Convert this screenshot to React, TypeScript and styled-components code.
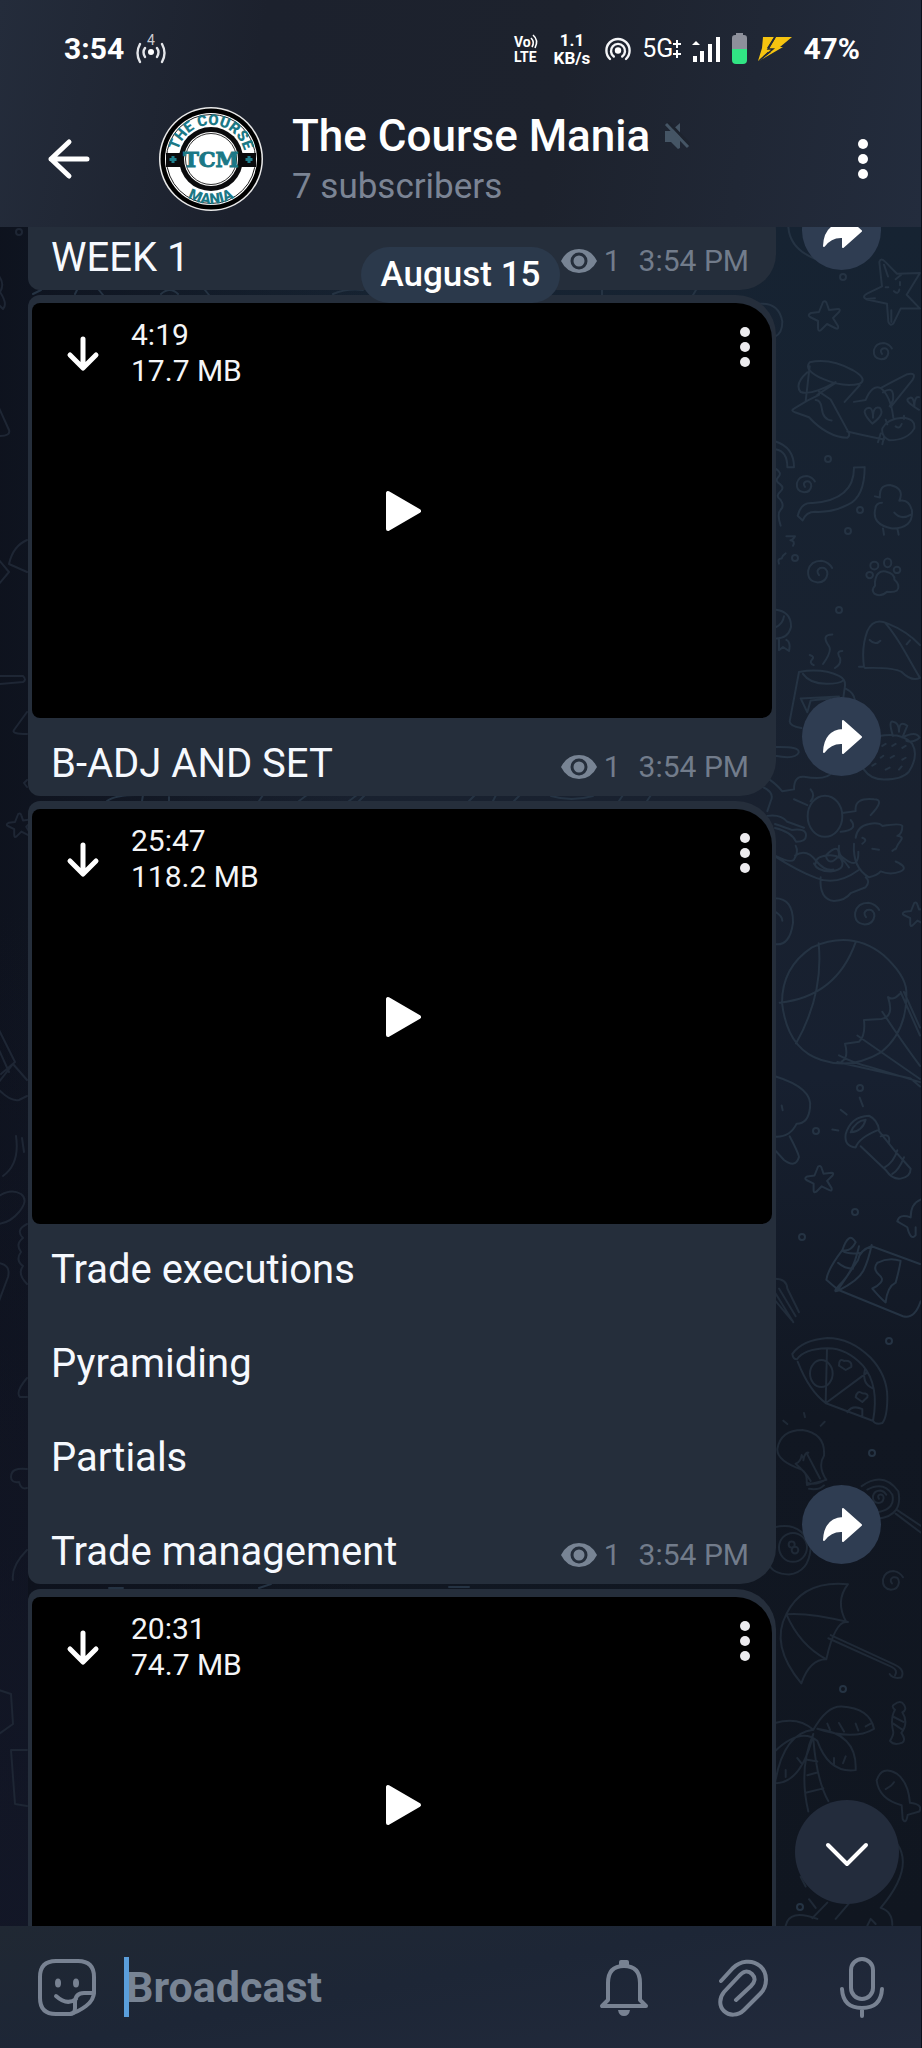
import React from 'react';
import styled, { createGlobalStyle } from 'styled-components';

const GlobalStyle = createGlobalStyle`
  *, *::before, *::after { box-sizing: border-box; }
  html, body, #root { height: 100%; }
  body { margin: 0; background: #111722; font-family: Roboto, "Liberation Sans", sans-serif; }
  button, input { font: inherit; color: inherit; border: 0; padding: 0; margin: 0; background: none; }
  button { cursor: pointer; }
  svg { display: block; flex: none; }
`;

const Screen = styled.div`
  height: 100vh;
  display: flex;
  flex-direction: column;
  overflow: hidden;
  border-right: 1px solid #0c111b;
  color: #fff;
`;

const Header = styled.header`
  flex: none;
  background: linear-gradient(100deg, #242c3b 0%, #1c212d 28%, #1d222d 60%, #232c3d 100%);
`;

const StatusBar = styled.div`
  display: flex;
  align-items: center;
  justify-content: space-between;
  height: 97px;
  padding: 0 61px 0 64px;
`;

const StatusGroup = styled.div<{ $gap: number }>`
  display: flex;
  align-items: center;
  gap: ${({ $gap }) => $gap}px;
`;

const Clock = styled.span`
  font-size: 30px;
  font-weight: 700;
  line-height: 36px;
`;

const Stacked = styled.span`
  display: flex;
  flex-direction: column;
  align-items: center;
  padding: 0 4px 0 2px;
  font-size: 17px;
  font-weight: 700;
  line-height: 18px;
`;

const Network = styled.span`
  display: flex;
  align-items: center;
  font-size: 25px;
  line-height: 32px;
`;

const TitleBar = styled.div`
  display: flex;
  align-items: center;
  height: 130px;
  padding: 0 43px 7px 43px;
`;

const IconButton = styled.button`
  flex: none;
  display: flex;
  align-items: center;
  justify-content: center;
`;

const AvatarSlot = styled.div`
  margin: 0 29px 0 66px;
`;

const TitleText = styled.div`
  flex: 1;
  min-width: 0;
  padding-top: 4px;
`;

const Title = styled.h1`
  display: flex;
  align-items: center;
  gap: 14px;
  margin: 0;
  font-size: 44px;
  font-weight: 500;
  line-height: 52px;
  white-space: nowrap;
`;

const Subtitle = styled.p`
  margin: 0;
  font-size: 35px;
  line-height: 50px;
  color: #7b8494;
`;

const Chat = styled.main`
  position: relative;
  flex: 1;
  min-height: 0;
  overflow: hidden;
  background:
    linear-gradient(180deg, rgba(20, 24, 41, 0) 40%, rgba(20, 24, 41, 0.8) 100%) 0 0 / 28px 100% no-repeat,
    linear-gradient(90deg, rgba(13, 17, 28, 0.9) 0, rgba(13, 17, 28, 0) 40%),
    linear-gradient(180deg, #162332 0%, #19212f 35%, #172030 50%, #111722 70%, #101620 100%);
`;

const Wallpaper = styled.svg`
  position: absolute;
  inset: 0;
  width: 100%;
  height: 100%;
  fill: none;
  stroke: #253343;
  stroke-width: 2;
  stroke-linecap: round;
  stroke-linejoin: round;

  path, circle, ellipse { vector-effect: non-scaling-stroke; }
`;

/* The list is scrolled 36px, so the first post is partly under the header. */
const Messages = styled.ol`
  position: relative;
  display: flex;
  flex-direction: column;
  gap: 5px;
  margin: -36px 0 0;
  padding: 0 40px 0 28px;
  list-style: none;
`;

const Row = styled.li`
  display: flex;
  align-items: flex-end;
  justify-content: space-between;
  gap: 26px;
`;

const Bubble = styled.article<{ $textOnly?: boolean }>`
  flex: 1;
  align-self: stretch;
  display: flex;
  flex-direction: column;
  justify-content: flex-end;
  background: #252e3b;
  border-radius: 12px 40px 36px 12px;
  padding: ${({ $textOnly }) => ($textOnly ? '0 4px' : '8px 4px 0')};
`;

const Video = styled.div`
  display: flex;
  align-items: flex-start;
  position: relative;
  height: 415px;
  padding: 14px 12px 0 34px;
  background: #000;
  border-radius: 8px 36px 10px 8px;
`;

const VideoInfo = styled.div`
  flex: 1;
  display: flex;
  flex-direction: column;
  padding-left: 31px;
  font-size: 30px;
  line-height: 36px;
  color: #f4f5f7;
`;

const DownloadButton = styled(IconButton)`
  margin-top: 16px;
`;

const PlayButton = styled(IconButton)`
  position: absolute;
  inset: 0;
  margin: auto;
  width: 60px;
  height: 60px;
  padding-left: 3px;
`;

const Caption = styled.div`
  display: flex;
  align-items: flex-end;
  justify-content: space-between;
  padding: 22px 23px 9px 19px;
`;

const CaptionText = styled.p`
  margin: 0;
  font-size: 40px;
  line-height: 47px;
  white-space: pre-line;
  color: #f6f9fe;
`;

const Meta = styled.div`
  display: flex;
  align-items: center;
  font-size: 30px;
  line-height: 36px;
  padding-bottom: 2px;
  color: #727c8b;
`;

const Views = styled.span`
  padding: 0 18px 0 7px;
`;

const ShareButton = styled(IconButton)`
  width: 79px;
  height: 79px;
  margin-bottom: 20px;
  border-radius: 50%;
  background: #2f3d52;
`;

const ShareSpacer = styled.span`
  width: 79px;
  flex: none;
`;

const DateBadge = styled.time`
  position: absolute;
  top: 20px;
  left: 50%;
  transform: translateX(-50%);
  padding: 0 20px;
  border-radius: 28px;
  background: #2b394b;
  font-size: 35px;
  font-weight: 500;
  line-height: 56px;
  white-space: nowrap;
`;

const ScrollDown = styled(IconButton)`
  position: absolute;
  right: 22px;
  bottom: 22px;
  width: 104px;
  height: 104px;
  padding-top: 4px;
  border-radius: 50%;
  background: #232c3c;
`;

const Composer = styled.footer`
  flex: none;
  display: flex;
  align-items: center;
  height: 122px;
  padding: 0 28px 0 36px;
  color: #788292;
  background: linear-gradient(170deg, #202833 0%, #1d2636 45%, #222a3c 100%);
`;

const InputField = styled.label`
  position: relative;
  flex: 1;
  min-width: 0;
  margin: 0 40px 0 26px;

  &::before {
    content: '';
    position: absolute;
    inset: 0 auto 0 0;
    width: 5px;
    background: #5a9edb;
  }
`;

const BroadcastInput = styled.input`
  display: block;
  width: 100%;
  height: 60px;
  padding-left: 2px;
  outline: none;
  font-size: 43px;
  font-weight: 700;

  &::placeholder { color: #788494; opacity: 1; }
`;

const Tools = styled.div`
  display: flex;
  align-items: center;
  gap: 57px;
`;

const MoreIcon = ({ color = '#fff' }: { color?: string }) => (
  <svg width="30" height="60" viewBox="0 0 30 60" fill={color}>
    <circle cx="15" cy="15" r="5" />
    <circle cx="15" cy="30" r="5" />
    <circle cx="15" cy="45" r="5" />
  </svg>
);

const BackIcon = () => (
  <svg width="50" height="50" viewBox="0 0 50 50" fill="none" stroke="#fff" strokeWidth="5" strokeLinecap="round" strokeLinejoin="round">
    <path d="M26 8 8 25l18 17M8 25h36" />
  </svg>
);

const HotspotCount = () => (
  <svg width="32" height="30" viewBox="0 0 32 30" fill="none" stroke="#e4e6ea" strokeWidth="2.400" strokeLinecap="round">
    <circle cx="16" cy="18" r="3" fill="#fff" stroke="none" />
    <path d="M10 14q-3 4 0 9M22 14q3 4 0 9M5 10q-5 9 0 18M27 10q5 9 0 18" />
    <text x="16" y="11" textAnchor="middle" fontSize="14" fill="#c9ccd2" stroke="none">4</text>
  </svg>
);

const VoLte = () => (
  <svg width="28" height="30" viewBox="0 0 28 30" fill="none" stroke="#fff" strokeWidth="2">
    <text x="1" y="13" fontSize="14" fontWeight="700" fill="#fff" stroke="none">Vo</text>
    <text x="1" y="28" fontSize="14" fontWeight="700" fill="#fff" stroke="none">LTE</text>
    <path d="M18 4q4 4 1 9M20 1q6 5 2 13" strokeWidth="1.600" />
  </svg>
);

const HotspotIcon = () => (
  <svg width="26" height="26" viewBox="0 0 26 26" fill="none" stroke="#f4f5f7" strokeWidth="2.400" strokeLinecap="round">
    <circle cx="13" cy="14.500" r="3.200" fill="#fff" stroke="none" />
    <path d="M8.800 20.500a7 7 0 1 1 8.400 0M5 23A11.600 11.600 0 1 1 21 23" />
  </svg>
);

const PlusMinusIcon = () => (
  <svg width="8" height="22" viewBox="0 0 8 22" fill="none" stroke="#fff" strokeWidth="2">
    <path d="M0 6h8M4 2v8M0 16h8M4 12v8" />
  </svg>
);

const SignalIcon = () => (
  <svg width="29" height="26" viewBox="0 0 29 26" fill="#fff">
    <path d="M0 9 4 5l4 4zM1 20h4v6H1zM8 15h4v11H8zM16 8h4v18h-4zM24 1h4v25h-4z" />
  </svg>
);

const BatteryIcon = () => (
  <svg width="15" height="31" viewBox="0 0 15 31">
    <path d="M4 0h7v2h1q3 0 3 3v11H0V5q0-3 3-3h1z" fill="#8d909b" />
    <path d="M0 16h15v11q0 4-4 4H4q-4 0-4-4z" fill="#31e584" />
  </svg>
);

const BoltIcon = () => (
  <svg width="34" height="26" viewBox="0 0 34 26" fill="#f6c410">
    <path d="M5 1h11L9 12h5L0 25 4 12z" />
    <path d="M18 1h16L22 11h3L1 25l12-9h-4z" />
    <path d="M17 1 10 13h5L2 24" fill="none" stroke="#232b38" strokeWidth="1.500" />
  </svg>
);

const MutedIcon = () => (
  <svg width="26" height="28" viewBox="0 0 26 28">
    <path d="M1 9h6l9-8v25l-2 1-7-7H1z" fill="#455565" />
    <path d="m4 0 22 23" stroke="#1d232e" strokeWidth="3" />
    <path d="m2 2 22 23" stroke="#455565" strokeWidth="3" />
  </svg>
);

const Avatar = () => (
  <svg width="104" height="104" viewBox="0 0 104 104" role="img" aria-label="The Course Mania">
    <defs>
      <path id="arcTop" d="M18 52a34 34 0 0 1 68 0" />
      <path id="arcBottom" d="M7 52a45 45 0 0 0 90 0" />
    </defs>
    <circle cx="52" cy="52" r="52" fill="#e9e9e9" />
    <circle cx="52" cy="52" r="50.500" fill="#000" />
    <circle cx="52" cy="52" r="46" fill="#fff" />
    <circle cx="52" cy="52" r="44.500" fill="none" stroke="#222" strokeWidth="1" />
    <path d="M7 46h90v14H7z" fill="#0b0b0d" />
    <circle cx="52" cy="52" r="32" fill="#0b0b0d" />
    <circle cx="52" cy="52" r="27" fill="#fff" />
    <circle cx="52" cy="52" r="25.500" fill="none" stroke="#333" strokeWidth="1" />
    <path d="M14 49v7M10.500 52.500h7M90 49v7M86.500 52.500h7" stroke="#1e7f8d" strokeWidth="3" />
    <g fill="#1b7886" fontFamily="Roboto, sans-serif" fontWeight="900">
      <text fontSize="15"><textPath href="#arcTop" startOffset="50%" textAnchor="middle">THE COURSE</textPath></text>
      <text fontSize="15"><textPath href="#arcBottom" startOffset="50%" textAnchor="middle">MANIA</textPath></text>
      <text x="52" y="60" fontSize="21" textAnchor="middle" fontFamily="DejaVu Serif, serif" stroke="#1b7886" strokeWidth="1">TCM</text>
    </g>
  </svg>
);

const DownloadIcon = () => (
  <svg width="34" height="40" viewBox="0 0 34 40" fill="none" stroke="#fff" strokeWidth="5" strokeLinecap="round" strokeLinejoin="round">
    <path d="M17 6v28M4 22l13 13 13-13" />
  </svg>
);

const PlayIcon = () => (
  <svg width="37" height="42" viewBox="0 0 37 42" fill="#fff" stroke="#fff" strokeWidth="4" strokeLinejoin="round">
    <path d="M3 3v36l31-18z" />
  </svg>
);

const EyeIcon = () => (
  <svg width="36" height="26" viewBox="0 0 36 26">
    <path d="M0 13Q6 1 18 1t18 12Q30 25 18 25T0 13z" fill="#788494" />
    <circle cx="18" cy="13" r="7" fill="none" stroke="#252e3b" strokeWidth="3" />
  </svg>
);

const ShareIcon = () => (
  <svg width="40" height="36" viewBox="0 0 40 36" fill="#fff" stroke="#fff" strokeWidth="2" strokeLinejoin="round">
    <path d="M21 2 39 18 21 34V24Q9 23 2 33 3 12 21 11z" />
  </svg>
);

const ChevronIcon = () => (
  <svg width="44" height="28" viewBox="0 0 44 28" fill="none" stroke="#fff" strokeWidth="4" strokeLinecap="round" strokeLinejoin="round">
    <path d="m3 5 19 19L41 5" />
  </svg>
);

const StickerIcon = () => (
  <svg width="62" height="62" viewBox="0 0 62 62" fill="none" stroke="#788292" strokeWidth="4" strokeLinecap="round" strokeLinejoin="round">
    <path d="M20 5h22q16 0 16 16v15q0 8-8 14t-16 8H20Q4 58 4 42V21Q4 5 20 5z" />
    <path d="M58 37H48q-9 0-9 10v5q0 6-5 6M20 40q11 10 20 3" />
    <ellipse cx="22" cy="27" rx="3" ry="4.500" fill="#788292" stroke="none" />
    <ellipse cx="40" cy="27" rx="3" ry="4.500" fill="#788292" stroke="none" />
  </svg>
);

const BellIcon = () => (
  <svg width="62" height="62" viewBox="0 0 62 62" fill="none" stroke="#788292" strokeWidth="4" strokeLinejoin="round">
    <path d="M9 50h44l-6-6V27Q47 10 31 10T15 27v17z" />
    <path d="M28 9V6h6v3" />
    <path d="M25 54h12q-1 6-6 6t-6-6z" fill="#788292" stroke="none" />
  </svg>
);

const ClipIcon = () => (
  <svg width="62" height="62" viewBox="0 0 62 62" fill="none" stroke="#788292" strokeWidth="4" strokeLinecap="round">
    <path d="M9 25 21 12C28 5 40 3 48 10s8 20 0 28L32 54C26 60 17 60 12 55s-5-13 0-19L27 20C31 15 36 14 40 18s3 8-1 12L24 44" />
  </svg>
);

const MicIcon = () => (
  <svg width="62" height="62" viewBox="0 0 62 62" fill="none" stroke="#788292" strokeWidth="4" strokeLinecap="round">
    <rect x="20" y="3" width="22" height="40" rx="11" />
    <path d="M11 33q1 19 20 19t20-19M31 53v7" />
  </svg>
);

const Star = ({ x, y, s = 1 }: { x: number; y: number; s?: number }) => (
  <path
    transform={`translate(${x} ${y}) scale(${s})`}
    d="M-1-15Q2-17 3-13L5-7 14-8Q17-8 15-5L9 1 14 9Q15 13 11 11L3 7-3 13Q-6 15-6 11L-6 4-14 0Q-17-2-13-4L-5-5z"
  />
);

const Spiral = ({ x, y, s = 1 }: { x: number; y: number; s?: number }) => (
  <path
    transform={`translate(${x} ${y}) scale(${s})`}
    d="M0 1q-3-4 1-6 6-1 6 5-1 7-8 7-9-1-8-10 2-8 11-8 6 1 9 6"
  />
);

const bubbles = [
  [844, 277], [829, 459], [861, 510], [849, 531], [796, 558], [840, 610], [861, 1088],
  [817, 1131], [856, 1212], [803, 1237], [890, 1341], [873, 1453], [844, 1689], [801, 1907],
];

const Doodles = () => (
  <Wallpaper viewBox="0 227 922 1699" preserveAspectRatio="xMaxYMin slice" aria-hidden="true">
    <g stroke="#1e2634">
      <circle cx="20" cy="232" r="3" />
      <path d="M0 276q6 8 1 16 8 12 3 17l-4-4M28 712l-13 18q-3 4 13 4M28 780l-3 3 3 4" />
      <path d="M0 408l10 22q2 6-10 6M28 540q-14 6-18 24l18 8M0 560l10 12-10 12M0 676h24q4 4 0 6l-24 2" />
      <path d="M0 1030l16 32-14 12M0 1050l10 22M0 1082l14-18 14 16M0 1090q12 12 20 10l8-4M17 1136q4 28-13 40M23 1138l2 14M0 1196q12-8 22-2 8 6-2 18-8 10-20 12M28 1224q-12 6-4 14-8 6-2 14-6 8 2 14-6 8 4 18M0 1263q12 2 9 14l-9 24M28 1378q-12 14-7 19h7M28 1469q-16-2-16 8 0 6 8 5 2 8 8 6" />
      <path d="M28 1550q-16 16-14 30M28 1750H12l4 54 12 2M0 1690l12 4 2 30-14 10" />
      <Star x={20} y={826} s={0.8} />
    </g>
    <Spiral x={883} y={353} s={0.9} />
    <Spiral x={806} y={486} s={0.9} />
    <Spiral x={820} y={574} s={1.2} />
    <Spiral x={867} y={916} s={1.2} />
    <Star x={825} y={317} />
    <Star x={820} y={1180} s={0.9} />
    <Star x={916} y={915} s={0.8} />
    {bubbles.map(([cx, cy]) => (
      <circle key={`${cx}-${cy}`} cx={cx} cy={cy} r="3" />
    ))}
    <g transform="translate(740 220) scale(.3333 .3954)">
      <path d="M421 106q5-12 18 0l35 30 69-2-40 55 40 35-58 0-22 38q-10 8-15-5l-4-45-60-11q-18-6 0-15l45-18zM435 113l12 30M470 150l20-14M383 200l25-2M457 258v-30M440 170h8M483 157v8M465 180q13 10 16-4" />
      <path d="M148 18q5 55 80 80M60 212q60-5 70 45 0 30-22 38M212 360q60-12 130 20 45 22 20 34-50 10-110-12-60-23-40-42zM212 370l-12 88M205 385q-40 30-20 50 30 10 105-25M362 418l-45 42M290 412l-55 30M240 442l-35 15-40 20q-12 5 5 10l40 12q55 50 115 52 8-6 5-12l-55-85-35-20M230 455q15 0 18 20 4 30 30 32M325 535q60 12 110 20M345 460l35-5q20-40 45-30 30 20 38 75M425 425q45-20 80-35 30-5 15 15l-65 68M432 436q35-20 30 20l-10 15M430 527q15-25 60-27 40 2 36 27-20 30-75 30-25-10-21-30zM470 522q12 8 18-6M400 515q-40-35-10-40 12 0 12 25 0-30 20-25 18 15-22 40zM540 480q-50-25-28-30 12-5 14 20 1-25 14-22M425 540l-8 22M435 550l-5 17M440 505l5 12M495 495v8" />
      <path d="M110 560q55 15 55 65h-20q0-40-35-45M345 626l32-1q0 75-50 95-45 20-98 18-28 0-38 22l-15-12q10-35 45-32 125-8 124-90zM112 630q18 10 6 20t5 18q15 10 0 20t2 20q12 15 0 25t0 40" />
      <path d="M408 699l15 3q-4-32 30-32 45 8 28 40 30-5 38 25 4 45-60 45-62-10-50-50 2-15 20-15M432 780l3 16M475 780l4 16M466 740q20 20 50 5" />
      <path d="M142 800h26q-8 10-14 10 16 2 8 14M140 843q-10 5-12 13-14 0-8 13M408 915q5-30 32-26 28 6 26 20 20 15 8 28-10 6-30 3-20 15-38 5-10-10 2-20z" />
      <ellipse cx="406" cy="874" rx="12" ry="10" /><ellipse cx="446" cy="867" rx="11" ry="11" /><ellipse cx="474" cy="885" rx="10" ry="8" /><ellipse cx="392" cy="898" rx="10" ry="8" />
      <path d="M108 985q50 5 48 45-10 30-48 28M110 1030q22-8 25-28M120 1060v28l12-8 18 10q6-22-8-28M212 1100q16 4 7 12t5 14M280 1048q-35 0-10 30 10 12-18 45M310 1090q-20 0-7 18 5 15-15 25M360 1130h15q-8-50 10-90 18-35 60-20 60 20 98 55M440 1020q30 30 60 75t43 63q-25 10-55-15-25-12-110-10M392 1062q18 15 32 2M503 1073l10-10" />
      <path d="M180 1143q70-10 120 10 20 8 18 25l-10 60M180 1143l-28 125q0 12 35 17M192 1148q20 25 70 25 40 0 50-8M320 1185q25 10 28 30M185 1210l115-5-15 20M185 1210l20 35 10-30 60-5M420 1305q70-10 100 20 20 30-10 70-20 20-75 20-40 0-60-25M462 1305q-15-40 0-36 18 2 18 25 0-30 25-15l-15 30q40-18 52 0-20 15-40 8M430 1330l10-5M460 1330l10-5M490 1335l10-5M425 1360l8-5M455 1360l10-5M490 1365l10-5M400 1380l10-5M440 1390l12-5M480 1390l8-8" />
      <path d="M108 1333q75-2 71 14-10 18-71 8M80 1410q25 10 50 35l35-5q0-35 30-32 70 10 85-12M215 1440q15 15 0 30M165 1465l40 15M60 1430q50 15 35 40l-10 25M85 1507q40-5 60 15l50 15M395 1505q45-40 10-40-60-5-55 30l-40 5" />
      <circle cx="258" cy="1508" r="52" />
    </g>
    <g transform="translate(740 820) scale(.3333 .3954)">
      <path d="M108 10q35 10 50 15 45-5 43 15 0 15-30 15-12-25-63-35M108 92q70 38 125 55 60 20 125-20M170 65q10 15-5 35-10 10-57-10M168 90q35-20 65 15 25 25 50 20M230 110q0-18 35-20 40-5 65 30M225 110q10 20 50 20 55-5 25-40M260 90q40-35 40 0-30 30-40 0zM300 65q-5 25 20 35 40 25 38-20M245 145q-5 55 40 60 35-2 50-20l45-15q15-15 0-25M350 45q5-30 40-35 30-5 40 5 55-8 60 0 0 20-15 25 20 2 10 12t-15 22M345 60q-5 60 45 85 25-5 35-15 30 10 60 0 25-10-15-25M370 45q18 5 0 15M400 73l20 2M460 78l10-6M335 0q25 25-30 30" />
      <path d="M108 198q55 0 54 62-10 60-54 54M110 233q20 10 20 22M122 462q170-15 228-153M239 312q15 130-68 253M129 462q0-90 90-140 120-45 215 20 65 50 68 90 5 100-75 155-90 45-180 20Q145 580 129 462zM300 595q45 20 95 30l148 38M295 612l220 42 28 20M355 545l188 110M430 485q50 65 113 137M485 435l58 110M495 435l48 90M447 448q15 10 35-8M447 448q20 50-20 55l-52 3q5 40-15 55l-42 5q12 35-10 45" />
      <path d="M108 648q115 30 105 80-5 40-40 40-20 35-65 33M152 800q25 40 28 52-10 30-45 8l-27-25M128 722l3 12M320 795q15-45 70-47 25 10 30 35-60 20-70 45-35-3-30-33zM335 790q15-30 45-32-10 30-45 32zM365 825l75 60q20 25 45 22 30-5 30-25-50-45-95-95M425 800q30-10 25 15M435 880q30-15 40-45M460 895q20-10 35-42M305 733l18 12M362 702l10 22M280 783l18 2" />
      <path d="M545 960q-30 10-30 45-35-10-40 10l30 15q10 35 25 20l0-20M310 1088q20-50 40-20-15 25-40 20M310 1088q-45 50-48 75l35 25 60-75q5-25 40-35M297 1120q20 15 45 15M310 1090q20 10 55 5M360 1078q-15 60-50 90t-12 22q60-25 75-50t25-65M398 1078l145 45M297 1188l195 67q35 8 53-38M415 1120q35-15 70-5M415 1120q-15 15 5 30 15 10 5 20t-25 15q25 25 40 35 5-40 30-50 10-30 15-55" />
    </g>
    <g stroke="#212c3a" transform="translate(740 820) scale(.3333 .3954)">
      <path d="M160 1350q30-35 105-40 70 0 130 50 50 45 50 100 0 50-15 65-20 5-28-5 20-90-30-140-50-45-108-44-70 2-90 28-12 0-14-14zM176 1370q35 75 85 105l142 45M264 1337l-4 138M260 1475l125-78M325 1498q15-20 45-8v18M300 1380q0-20 15-12 25-2 22 15l-17 8zM350 1460q5-20 20-10 20 0 15 10l-15 12zM378 1390q-10 35 22 47" />
      <circle cx="247" cy="1400" r="34" />
      <path d="M108 1160q35 0 37 25l35 60M108 1195l55 75M108 1215l50 50M120 1185l50 70" />
    </g>
    <g stroke="#1f2936" transform="translate(740 1400) scale(.3333 .3443)">
      <path d="M203 232q0-20-15-30-75-25-73-60 10-55 75-55 70 10 65 75-20 30 7 70l-58 15zM170 185q30 25 45 50M205 158l38 70M170 185q15-5 18-25 8 12 5 15 5-25 15-22M203 240q30 10 58-10M210 258q30 5 45-10M245 75l12-12M133 60l12 10M195 38l3 12M105 370q85-20 110 60-5 70-65 77-50-3-60-30" />
      <circle cx="162" cy="428" r="42" /><circle cx="158" cy="420" r="9" /><circle cx="168" cy="436" r="10" />
      <path d="M368 250q65-45 110 15 15 70-60 80M470 330l75 55M475 320l70 45M385 260q50-25 75 15 10 40-40 50" />
      <Spiral x={420} y={285} s={2} />
      <Spiral x={459} y={530} s={3} />
      <path d="M142 622q50-100 185-87-40 50-5 110-35 0-60 108-50 0-75 70-95-110-45-201zM142 622q70-5 185 23M142 622q40 90 120 131M275 683l190 85q35 15 22 38-25 5-35-10M268 692l190 83q20 10 10 25" />
      <path d="M108 938q70-20 115 20 40-70 85-68 85 5 97 65-60 35-170 0 120 15 115 120-80 10-115-85-50-40-127 30M223 958q-90 10-115 155 80 0 115-143-45 100-15 225M223 985q10 120 45 180M205 1090l30-8M203 1140l50-12M205 1045l30 5M265 940l8 18M300 938l15 25M350 940l8 20M395 940l-15 8M175 1040l15 18M140 1075v20M320 1035l-8 20M285 1040v20" />
      <path d="M465 885q20-15 30 0 10 15-5 22 20 30-3 60 15 20 3 28-25 10-37-5 10-15 10-25-10-40 5-65-12-10-3-15zM463 920l30 15M463 940l28 18M413 1105q15-45 60-20 35 25 40 85 40 5 28 25l-35 10q-5 30-15 12l-3-40Q420 1160 413 1105zM440 1130q20-10 25-20" />
      <path d="M475 1290q50 70-50 185 35 10 35 50M220 1505l45-45M290 1507l40-45M210 1450l20 25M185 1385l15 28M140 1527q10-50 95-20M385 1527l10-20 15 15" />
    </g>
    <path d="M34 294l8-4M76 294l2-4M100 290l4 5M162 294q9-8 17 0M206 290l4 5M334 294q14-6 30-4M108 801q8-6 30-6M144 795l-1 6M170 797v4M260 801l4-6M300 801l8-6M350 801l8-6M360 801l6-6M603 290v5M694 295l3-5M470 801l6-6M494 801l3-6M515 801l6-6M552 796q20 6 42 0M620 801l4-6M648 801l4-6M110 1588h14M260 1588l12-4M450 1587h20" />
  </Wallpaper>
);

interface VideoPost {
  duration?: string;
  size?: string;
  caption?: string;
}

const posts: VideoPost[] = [
  { caption: 'WEEK 1' },
  { duration: '4:19', size: '17.7 MB', caption: 'B-ADJ AND SET' },
  { duration: '25:47', size: '118.2 MB', caption: 'Trade executions\n\nPyramiding\n\nPartials\n\nTrade management' },
  { duration: '20:31', size: '74.7 MB' },
];

const Post = ({ duration, size, caption }: VideoPost) => (
  <Row>
    <Bubble $textOnly={!duration}>
      {duration && (
        <Video>
          <DownloadButton aria-label="Download"><DownloadIcon /></DownloadButton>
          <VideoInfo>
            <span>{duration}</span>
            <span>{size}</span>
          </VideoInfo>
          <IconButton aria-label="Video options"><MoreIcon color="#ecebee" /></IconButton>
          <PlayButton aria-label="Play"><PlayIcon /></PlayButton>
        </Video>
      )}
      {caption && (
        <Caption>
          <CaptionText>{caption}</CaptionText>
          <Meta><EyeIcon /><Views>1</Views><span>3:54 PM</span></Meta>
        </Caption>
      )}
    </Bubble>
    {caption ? <ShareButton aria-label="Share"><ShareIcon /></ShareButton> : <ShareSpacer />}
  </Row>
);

export default function App() {
  return (
    <>
      <GlobalStyle />
      <Screen>
        <Header>
          <StatusBar>
            <StatusGroup $gap={11}>
              <Clock>3:54</Clock>
              <HotspotCount />
            </StatusGroup>
            <StatusGroup $gap={11}>
              <VoLte />
              <Stacked><span>1.1</span><span>KB/s</span></Stacked>
              <HotspotIcon />
              <Network>5G<PlusMinusIcon /></Network>
              <SignalIcon />
              <BatteryIcon />
              <BoltIcon />
              <Clock>47%</Clock>
            </StatusGroup>
          </StatusBar>
          <TitleBar>
            <IconButton aria-label="Back"><BackIcon /></IconButton>
            <AvatarSlot><Avatar /></AvatarSlot>
            <TitleText>
              <Title>The Course Mania <MutedIcon /></Title>
              <Subtitle>7 subscribers</Subtitle>
            </TitleText>
            <IconButton aria-label="More options"><MoreIcon /></IconButton>
          </TitleBar>
        </Header>
        <Chat>
          <Doodles />
          <Messages>
            {posts.map((post, i) => <Post key={i} {...post} />)}
          </Messages>
          <DateBadge>August 15</DateBadge>
          <ScrollDown aria-label="Scroll to bottom"><ChevronIcon /></ScrollDown>
        </Chat>
        <Composer>
          <IconButton aria-label="Stickers"><StickerIcon /></IconButton>
          <InputField>
            <BroadcastInput aria-label="Broadcast message" placeholder="Broadcast" />
          </InputField>
          <Tools>
            <IconButton aria-label="Notifications"><BellIcon /></IconButton>
            <IconButton aria-label="Attach file"><ClipIcon /></IconButton>
            <IconButton aria-label="Record voice message"><MicIcon /></IconButton>
          </Tools>
        </Composer>
      </Screen>
    </>
  );
}
